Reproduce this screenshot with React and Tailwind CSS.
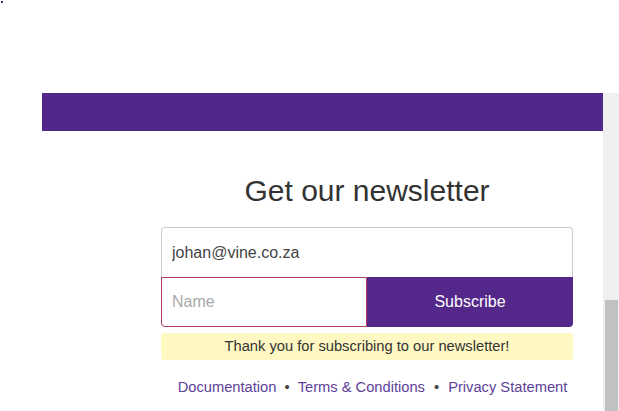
export default function App() {
  return (
    <div
      className="w-[619px] h-[411px] overflow-hidden bg-white flex flex-col"
      style={{ fontFamily: '"Liberation Sans", Arial, sans-serif' }}
    >
      <div className="h-[93px] shrink-0">
        <div className="w-[2px] h-[2px] ml-[1px] mt-[1px] bg-[#4a2a7a]" />
      </div>
      <div className="flex flex-1">
        <main className="flex-1 pl-[42px]">
          <div className="h-[38px] bg-[#51278a]" />
          <div className="ml-[119px] w-[412px] pt-[43px]">
            <h2 className="text-[30px] leading-[34px] text-[#333] text-center">
              Get our newsletter
            </h2>
            <form className="mt-[19px]" onSubmit={(e) => e.preventDefault()}>
              <input
                type="email"
                defaultValue="johan@vine.co.za"
                className="block w-full h-[50px] px-[10px] text-[16px] text-[#444] border border-[#cccccc] border-b-0 rounded-t-[4px] outline-none"
              />
              <div className="flex h-[50px]">
                <input
                  type="text"
                  placeholder="Name"
                  className="w-[206px] h-full px-[10px] text-[16px] text-[#444] placeholder:text-[#a9a9a9] border border-[#b23c5a] rounded-bl-[4px] outline-none"
                />
                <button
                  type="submit"
                  className="flex-1 h-full bg-[#53288a] text-white text-[16px] rounded-br-[4px]"
                >
                  Subscribe
                </button>
              </div>
            </form>
            <div className="mt-[6px] h-[27px] flex items-center justify-center bg-[#fff8c2] rounded-[3px] text-[14.7px] text-[#333]">
              Thank you for subscribing to our newsletter!
            </div>
            <div className="mt-[16px] flex justify-center pl-[11px] text-[14.7px] text-[#5e3f98]">
              <a href="#">Documentation</a>
              <span className="mx-[8px] text-[#444]">•</span>
              <a href="#">Terms &amp; Conditions</a>
              <span className="mx-[9px] text-[#444]">•</span>
              <a href="#">Privacy Statement</a>
            </div>
          </div>
        </main>
        <div className="w-[16px] shrink-0 bg-[#f0f0f0] flex flex-col pt-[207px] pl-[2px] pr-[1px]">
          <div className="flex-1 bg-[#c1c1c1]" />
        </div>
      </div>
    </div>
  );
}
